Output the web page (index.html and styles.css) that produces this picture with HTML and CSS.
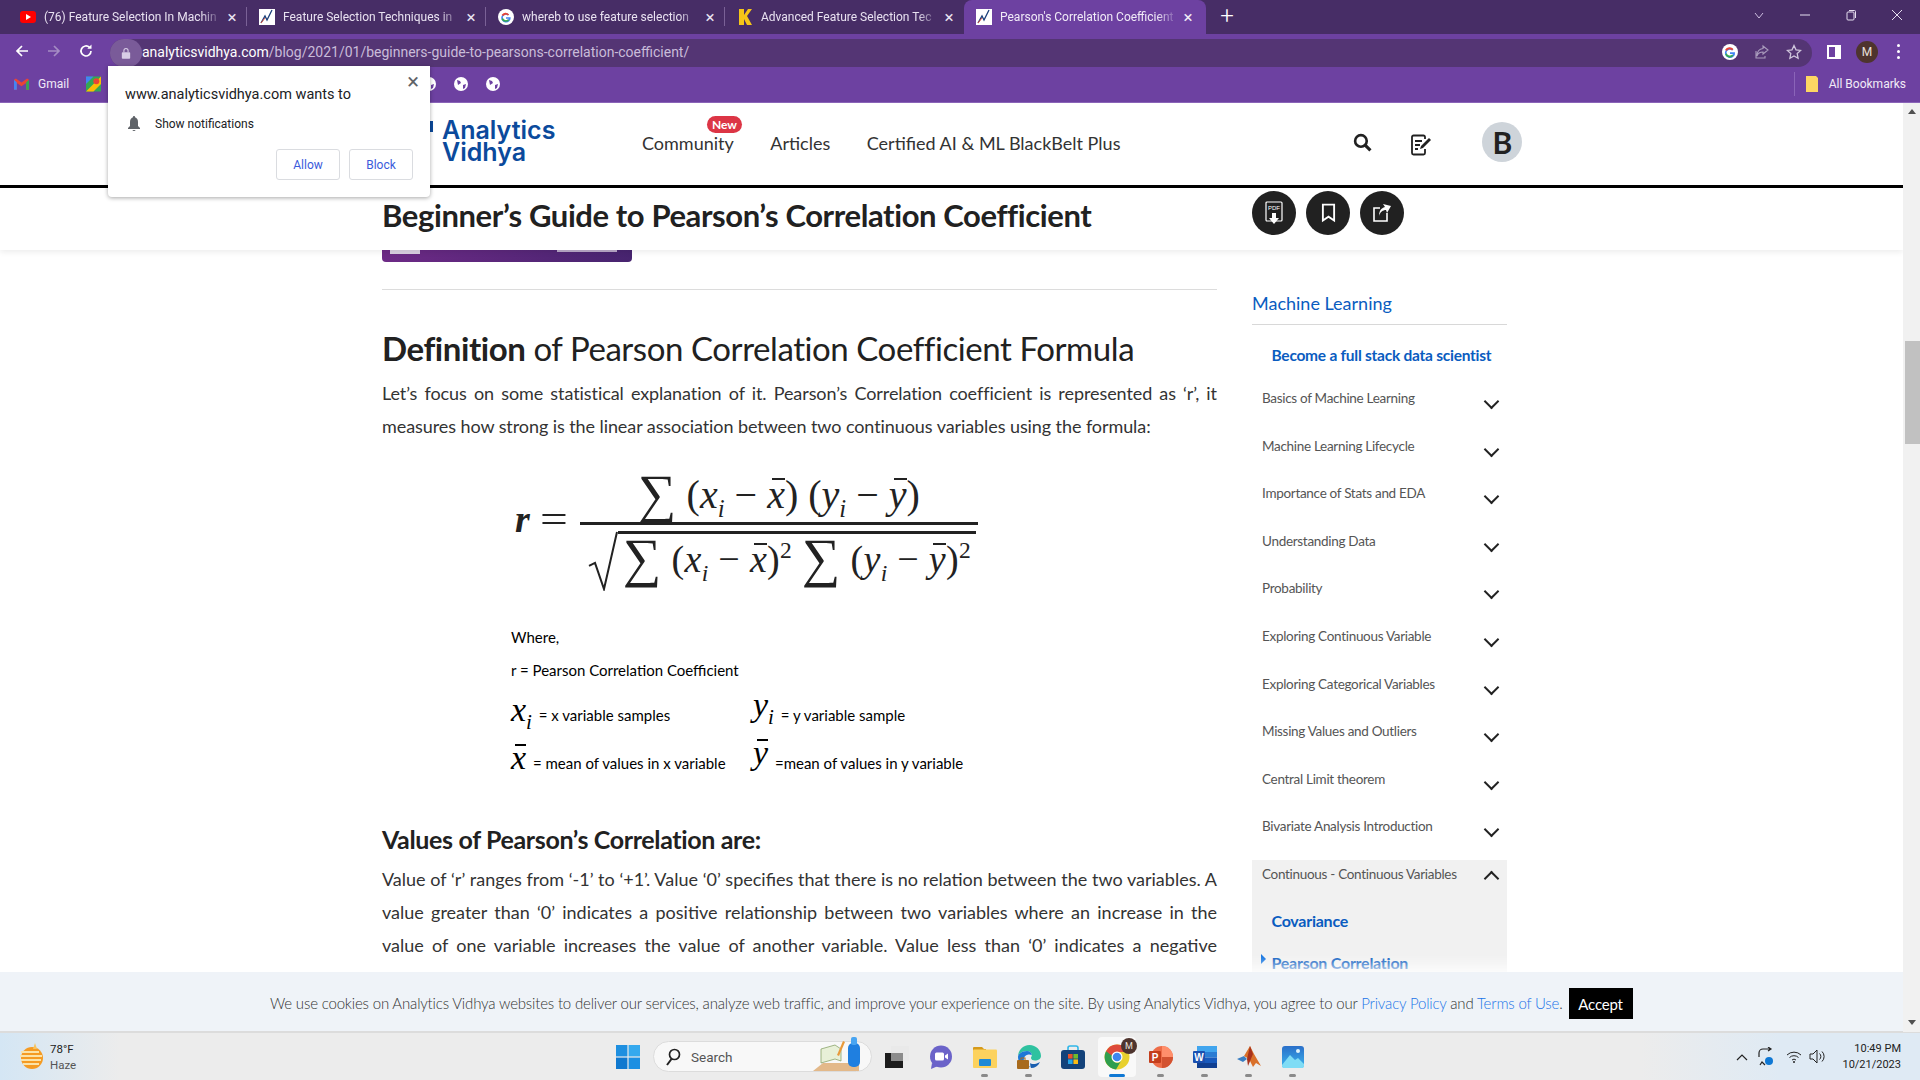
FILE: index.html
```html
<!DOCTYPE html>
<html lang="en">
<head>
  <meta charset="UTF-8" />
  <title>Pearson's Correlation Coefficient</title>
  <link rel="stylesheet" href="styles.css">
</head>
<body>

  <!-- browser chrome -->
  <div class="tabstrip">
    <div class="tab first">
      <svg class="fav" viewBox="0 0 16 16"><rect x="0" y="2" width="16" height="12" rx="3" fill="#f00"/><path d="M6 5l5 3-5 3z" fill="#fff"/></svg>
      <span class="tab-title">(76) Feature Selection In Machin</span><span class="tab-x">×</span>
    </div>
    <div class="tab">
      <svg class="fav" viewBox="0 0 16 16"><rect width="16" height="16" fill="#fff"/><path d="M2 14l4-7 2 4 5-10" fill="none" stroke="#1b3f7a" stroke-width="1.3"/><path d="M2 14l4-5" stroke="#e0503a" stroke-width="1"/></svg>
      <span class="tab-title">Feature Selection Techniques in</span><span class="tab-x">×</span>
    </div>
    <div class="tab">
      <svg class="fav" viewBox="0 0 16 16"><circle cx="8" cy="8" r="8" fill="#fff"/><path d="M12.6 8.2H8v1.6h2.7a3 3 0 1 1-.8-3.2l1.2-1.2A4.7 4.7 0 1 0 12.6 8.2z" fill="#4285f4"/><path d="M3.6 6l1.5 1.1a3 3 0 0 1 4.8-.5l1.2-1.2A4.7 4.7 0 0 0 3.6 6z" fill="#ea4335"/><path d="M3.5 10.2l1.5-1.1a3 3 0 0 0 4.9 1.2l1.2 1.1a4.7 4.7 0 0 1-7.600-1.200z" fill="#34a853"/></svg>
      <span class="tab-title">whereb to use feature selection</span><span class="tab-x">×</span>
    </div>
    <div class="tab">
      <svg class="fav" viewBox="0 0 16 16"><path d="M2 0h5v6l4-6h4l-5 7 5 9h-5l-3-6v6H2z" fill="#f5c518"/></svg>
      <span class="tab-title">Advanced Feature Selection Tec</span><span class="tab-x">×</span>
    </div>
    <div class="tab active">
      <svg class="fav" viewBox="0 0 16 16"><rect width="16" height="16" fill="#fff"/><path d="M2 14l4-7 2 4 5-10" fill="none" stroke="#1b3f7a" stroke-width="1.3"/><path d="M2 14l4-5" stroke="#e0503a" stroke-width="1"/></svg>
      <span class="tab-title">Pearson's Correlation Coefficient</span><span class="tab-x">×</span>
    </div>
    <div class="newtab">+</div>
    <div class="winctl">
      <svg viewBox="0 0 12 12"><path d="M2 4l4 5 4-5" fill="none" stroke="#cdbfe0"/></svg>
      <svg viewBox="0 0 12 12"><path d="M1 6h10" stroke="#e6dff0"/></svg>
      <svg viewBox="0 0 12 12"><rect x="2" y="3" width="7" height="8" rx="1" fill="none" stroke="#e6dff0"/><path d="M4 1.500h5.500a1 1 0 0 1 1 1V9" fill="none" stroke="#e6dff0"/></svg>
      <svg viewBox="0 0 12 12"><path d="M1 1l10 10M11 1L1 11" stroke="#e6dff0"/></svg>
    </div>
  </div>

  <div class="toolbar">
    <svg class="nav-ico" viewBox="0 0 16 16"><path d="M14 8H3M8 3L3 8l5 5" fill="none" stroke="#fff" stroke-width="1.700"/></svg>
    <svg class="nav-ico" viewBox="0 0 16 16"><path d="M2 8h11M8 3l5 5-5 5" fill="none" stroke="#a58cc4" stroke-width="1.700"/></svg>
    <svg class="nav-ico" viewBox="0 0 16 16"><path d="M13 8a5 5 0 1 1-1.500-3.600" fill="none" stroke="#fff" stroke-width="1.700"/><path d="M13.500 1.500v4.200H9.300z" fill="#fff"/></svg>
    <div class="omnibox">
      <div class="lock"><svg viewBox="0 0 12 14" width="10" height="12"><rect x="1" y="6" width="10" height="8" rx="1" fill="#d8cde6"/><path d="M3.500 6V4a2.500 2.500 0 0 1 5 0v2" fill="none" stroke="#d8cde6" stroke-width="1.300"/></svg></div>
      <div class="url"><b>analyticsvidhya.com</b>/blog/2021/01/beginners-guide-to-pearsons-correlation-coefficient/</div>
      <svg class="omni-ico" viewBox="0 0 16 16"><circle cx="8" cy="8" r="8" fill="#fff"/><path d="M13 8.200H8v1.800h3a3.300 3.300 0 1 1-.9-3.500l1.300-1.300A5.100 5.100 0 1 0 13 8.200z" fill="#4285f4"/><path d="M3.100 5.700l1.600 1.200a3.300 3.300 0 0 1 5.400-.5l1.300-1.300a5.100 5.100 0 0 0-8.300.6z" fill="#ea4335"/><path d="M3.100 10.500l1.600-1.200a3.300 3.300 0 0 0 5.500 1.300l1.300 1.200a5.100 5.100 0 0 1-8.400-1.300z" fill="#34a853"/></svg>
      <svg class="omni-ico" viewBox="0 0 16 16"><path d="M9 2l5 4-5 4V8C6 8 4 9 3 12c0-4 2-7 6-7.500zM2 7v7h9v-2" fill="none" stroke="#a99bbc" stroke-width="1.100"/></svg>
      <svg class="omni-ico" viewBox="0 0 16 16"><path d="M8 1.500l2 4.300 4.700.6-3.500 3.200.9 4.700L8 12l-4.100 2.300.9-4.700L1.300 6.400 6 5.800z" fill="none" stroke="#cfc5dc" stroke-width="1.300"/></svg>
    </div>
    <svg class="side-ico" viewBox="0 0 14 14"><rect x="1" y="1" width="12" height="12" fill="none" stroke="#fff" stroke-width="2"/><rect x="8" y="1" width="5" height="12" fill="#fff"/></svg>
    <div class="avatar">M</div>
    <div class="dots"><i></i><i></i><i></i></div>
  </div>

  <div class="bookmarks">
    <svg class="bm-ico" viewBox="0 0 16 12"><path d="M0 1.500V12h3V5l5 3.500L13 5v7h3V1.500L14 0 8 4.500 2 0z" fill="#ea4335"/><path d="M0 1.500V12h3V4z" fill="#4285f4"/><path d="M16 1.500V12h-3V4z" fill="#34a853"/></svg>
    <span class="bm-label">Gmail</span>
    <svg class="bm-maps" viewBox="0 0 16 16"><rect width="16" height="16" fill="#34a853"/><path d="M0 16L16 0v8L8 16z" fill="#fbbc04"/><path d="M0 0h8L0 8z" fill="#4285f4"/><circle cx="11" cy="5" r="3.200" fill="#ea4335"/></svg>
    <div class="globes">
      <svg class="globe" viewBox="0 0 14 14"><circle cx="7" cy="7" r="7" fill="#fff"/><path d="M3 3l3 1 1 2-3 2zM9 8l3-1-1 4-2 1z" fill="#6d41a1"/></svg>
      <svg class="globe" viewBox="0 0 14 14"><circle cx="7" cy="7" r="7" fill="#fff"/><path d="M3 3l3 1 1 2-3 2zM9 8l3-1-1 4-2 1z" fill="#6d41a1"/></svg>
      <svg class="globe" viewBox="0 0 14 14"><circle cx="7" cy="7" r="7" fill="#fff"/><path d="M3 3l3 1 1 2-3 2zM9 8l3-1-1 4-2 1z" fill="#6d41a1"/></svg>
    </div>
    <div class="all-bm">
      <svg width="12" height="16" viewBox="0 0 12 16"><path d="M0 0h10l2 2v14H0z" fill="#fdd663"/></svg>
      All Bookmarks
    </div>
  </div>

  <div class="viewport">
    <div class="page">

      <header class="site-head">
        <svg class="logo-mark" viewBox="0 0 30 30"><path d="M23 0h3v11h-5z" fill="#0b4a9c"/></svg>
        <div class="logo">Analytics<br>Vidhya</div>
        <nav class="site-nav">
          <a class="has-badge">Community<span class="badge">New</span></a>
          <a>Articles</a>
          <a>Certified AI &amp; ML BlackBelt Plus</a>
        </nav>
        <div class="head-icons">
          <svg class="ico-search" viewBox="0 0 18 18"><circle cx="7.500" cy="7.500" r="5.500" fill="none" stroke="#212121" stroke-width="2.500"/><path d="M11.500 11.500l5 5" stroke="#212121" stroke-width="3"/></svg>
          <svg class="ico-note" viewBox="0 0 22 22"><path d="M15 5V3a1.500 1.500 0 0 0-1.500-1.500h-10A1.500 1.500 0 0 0 2 3v16a1.500 1.500 0 0 0 1.500 1.500h10A1.500 1.500 0 0 0 15 19v-4" fill="none" stroke="#212121" stroke-width="1.800"/><path d="M5 7h7M5 11h5M5 15h3" stroke="#212121" stroke-width="1.800"/><path d="M10 15l1-3 8-8 2 2-8 8z" fill="#212121"/></svg>
          <div class="user-b">B</div>
        </div>
      </header>

      <div class="title-bar">
        <h1>Beginner’s Guide to Pearson’s Correlation Coefficient</h1>
        <div class="round-btns">
          <div class="round-btn"><svg viewBox="0 0 20 24" width="20" height="24"><rect x="2" y="1" width="16" height="19" rx="1" fill="none" stroke="#fff" stroke-width="1.200"/><text x="10" y="9" font-size="6" font-family="Liberation Sans" text-anchor="middle" fill="#fff">PDF</text><path d="M8 12h4v5h3l-5 6-5-6h3z" fill="#fff"/></svg></div>
          <div class="round-btn"><svg viewBox="0 0 16 20" width="15" height="20"><path d="M2 1h12v17l-6-4-6 4z" fill="none" stroke="#fff" stroke-width="2"/></svg></div>
          <div class="round-btn"><svg viewBox="0 0 20 20" width="20" height="20"><path d="M15 10v8H2V5h6" fill="none" stroke="#fff" stroke-width="1.600"/><path d="M11 1l8 2-4 7-1-3c-3 0-6 2-7 6 0-5 2-8 6-9z" fill="#fff"/></svg></div>
        </div>
      </div>

      <div class="content">
        <article class="article">
          <div class="banner"><i class="banner-a"></i><i class="banner-b"></i></div>
          <hr class="rule">
          <h2><strong>Definition</strong> of Pearson Correlation Coefficient Formula</h2>
          <p>Let’s focus on some statistical explanation of it. Pearson’s Correlation coefficient is represented as ‘r’, it measures how strong is the linear association between two continuous variables using the formula:</p>

          <div class="figure">
            <div class="formula">
              <span class="f-r">r</span><span class="f-eq">=</span>
              <div class="frac">
                <div class="num"><span class="sig">∑</span> (<i>x<sub>i</sub></i> − <i class="bar">x</i>) (<i>y<sub>i</sub></i> − <i class="bar">y</i>)</div>
                <div class="den">
                  <svg class="radical" viewBox="0 0 30 62" preserveAspectRatio="none"><path d="M1 36l6-3 9 27L29 1" fill="none" stroke="#222" stroke-width="2"/></svg>
                  <div class="den-in"><span class="sig">∑</span> (<i>x<sub>i</sub></i> − <i class="bar">x</i>)<sup>2</sup> <span class="sig">∑</span> (<i>y<sub>i</sub></i> − <i class="bar">y</i>)<sup>2</sup></div>
                </div>
              </div>
            </div>
            <div class="legend">
              <div class="leg-line">Where,</div>
              <div class="leg-line">r = Pearson Correlation Coefficient</div>
              <div class="leg-grid">
                <div><i class="leg-var">x<sub>i</sub></i> = x variable samples</div>
                <div><i class="leg-var up">y<sub>i</sub></i> = y variable sample</div>
                <div><i class="leg-var bar">x</i> = mean of values in x variable</div>
                <div><i class="leg-var bar up">y</i> =mean of values in y variable</div>
              </div>
            </div>
          </div>

          <h3>Values of Pearson’s Correlation are:</h3>
          <p>Value of ‘r’ ranges from ‘-1’ to ‘+1’. Value ‘0’ specifies that there is no relation between the two variables. A value greater than ‘0’ indicates a positive relationship between two variables where an increase in the value of one variable increases the value of another variable. Value less than ‘0’ indicates a negative relationship between two variables where an increase in the value of one decreases the value of another.</p>
        </article>

        <aside class="sidebar">
          <div class="side-title">Machine Learning</div>
          <div class="side-cta">Become a full stack data scientist</div>
          <div class="side-item">Basics of Machine Learning</div>
          <div class="side-item">Machine Learning Lifecycle</div>
          <div class="side-item">Importance of Stats and EDA</div>
          <div class="side-item">Understanding Data</div>
          <div class="side-item">Probability</div>
          <div class="side-item">Exploring Continuous Variable</div>
          <div class="side-item">Exploring Categorical Variables</div>
          <div class="side-item">Missing Values and Outliers</div>
          <div class="side-item">Central Limit theorem</div>
          <div class="side-item">Bivariate Analysis Introduction</div>
          <div class="side-open">
            <div class="side-item open">Continuous - Continuous Variables</div>
            <div class="side-sub">Covariance</div>
            <div class="side-sub current">Pearson Correlation</div>
          </div>
        </aside>
      </div>

      <div class="cookie">
        <span>We use cookies on Analytics Vidhya websites to deliver our services, analyze web traffic, and improve your experience on the site. By using Analytics Vidhya, you agree to our <a>Privacy Policy</a> and <a>Terms of Use</a>.</span>
        <button class="accept">Accept</button>
      </div>
    </div>

    <div class="scrollbar">
      <i class="sb-up"></i>
      <i class="sb-thumb"></i>
      <i class="sb-down"></i>
    </div>
  </div>

  <!-- site permission popup -->
  <div class="perm">
    <div class="perm-x">×</div>
    <div class="perm-title">www.analyticsvidhya.com wants to</div>
    <div class="perm-row">
      <svg width="14" height="15" viewBox="0 0 14 15"><path d="M7 0a1 1 0 0 1 1 1.200C10 1.800 11 3.500 11 6v4l2 2v1H1v-1l2-2V6c0-2.500 1-4.200 3-4.800A1 1 0 0 1 7 0zM5.500 14h3a1.500 1 0 0 1-3 0z" fill="#5f6368"/></svg>
      Show notifications
    </div>
    <div class="perm-btns"><button>Allow</button><button>Block</button></div>
  </div>

  <!-- windows taskbar -->
  <div class="taskbar">
    <div class="weather">
      <svg width="26" height="28" viewBox="0 0 26 28"><circle cx="13" cy="15" r="11" fill="#f59b23"/><path d="M2 9h18M1 13h22M2 17h20M4 21h16" stroke="#fbe3a8" stroke-width="2"/><path d="M16 0l2 6h-4z" fill="#f7c35f"/></svg>
      <div class="weather-txt"><div>78°F</div><div class="dim">Haze</div></div>
    </div>
    <div class="tb-item">
      <svg width="24" height="24" viewBox="0 0 24 24"><path d="M0 0h11.400v11.400H0z" fill="#1e8fe0"/><path d="M12.600 0H24v11.400H12.600z" fill="#35a9ee"/><path d="M0 12.600h11.400V24H0z" fill="#0f78cf"/><path d="M12.600 12.600H24V24H12.600z" fill="#1c8fe2"/></svg>
    </div>
    <div class="tb-search">
      <svg width="16" height="18" viewBox="0 0 16 18"><circle cx="9.500" cy="6.500" r="5" fill="none" stroke="#222" stroke-width="1.700"/><path d="M6.500 11L2 17" stroke="#222" stroke-width="2"/></svg>
      <span>Search</span>
      <svg class="search-art" width="56" height="34" viewBox="0 0 56 34"><path d="M0 34l10-8h36v8z" fill="#e3b98a"/><path d="M8 12l14-4 6 4v12l-6-2-14 4z" fill="#e8f0d8" stroke="#7d9a5a" stroke-width=".7"/><path d="M24 18l6-14 2 1-6 14z" fill="#e89a3c"/><rect x="35" y="6" width="12" height="24" rx="5" fill="#1f7fe0"/><rect x="38" y="0" width="6" height="8" rx="2" fill="#49a5f2"/></svg>
    </div>
    <div class="tb-item">
      <svg width="24" height="22" viewBox="0 0 24 22"><rect x="6" width="18" height="15" fill="#e9e9e9"/><rect y="7" width="18" height="15" fill="#1c1c1c"/><rect x="6" y="7" width="12" height="8" fill="#8c8c8c"/></svg>
    </div>
    <div class="tb-item">
      <svg width="24" height="24" viewBox="0 0 24 24"><circle cx="12" cy="11.500" r="11" fill="#6b63c9"/><path d="M3 18l-1 6 7-3z" fill="#6b63c9"/><rect x="6" y="7.500" width="9" height="8" rx="1.500" fill="#fff"/><path d="M16 10.500l3-2v6l-3-2z" fill="#fff"/></svg>
    </div>
    <div class="tb-item running">
      <svg width="24" height="22" viewBox="0 0 24 22"><path d="M0 2a1 1 0 0 1 1-1h8l2 2h2v3H0z" fill="#d69a1a"/><rect y="3.500" width="24" height="18.500" rx="1" fill="#fcd25e"/><rect x="6" y="13" width="12" height="7" rx="1" fill="#1f8ad6"/></svg>
    </div>
    <div class="tb-item running">
      <svg width="24" height="24" viewBox="0 0 24 24"><path d="M1 12C1 5 6 0 12.500 0 19 0 24 5 24 11c0 3-3 4.500-6 4.500-2 0-4-.8-4-2.500 0-1 .8-1.500.8-3C14.800 8 13 6 10 6 5 6 1 9 1 12z" fill="#2fc2a0"/><path d="M1 12c0-3 4-6 9-6 3 0 4.800 2 4.800 4-2-1-7-1-8 4 0 3 3 7 7 8C6 23 1 18 1 12z" fill="#1e78d6"/><path d="M14 23c4 0 7-2 9-6-3 2-8 3-10 1 .3 2 .5 4 1 5z" fill="#1a5fb0"/><rect y="15" width="12" height="9" rx="1" fill="#a86a1c"/><rect x="4" y="13" width="4" height="3" fill="none" stroke="#a86a1c"/></svg>
    </div>
    <div class="tb-item">
      <svg width="24" height="24" viewBox="0 0 24 24"><path d="M7 6V3a2 2 0 0 1 2-2h6a2 2 0 0 1 2 2v3" fill="none" stroke="#30b6e8" stroke-width="1.600"/><rect y="5" width="24" height="19" rx="3" fill="#13427a"/><rect x="7" y="9" width="4.600" height="4.600" fill="#e8532b"/><rect x="12.400" y="9" width="4.600" height="4.600" fill="#6fbb2c"/><rect x="7" y="14.400" width="4.600" height="4.600" fill="#22a5e8"/><rect x="12.400" y="14.400" width="4.600" height="4.600" fill="#f9bb14"/></svg>
    </div>
    <div class="tb-item active">
      <svg width="26" height="26" viewBox="0 0 26 26"><circle cx="13" cy="13" r="12.500" fill="#e8d02e"/><path d="M13 .5A12.500 12.500 0 0 0 2 7.300L7.500 16l1-4A5 5 0 0 1 13 8h11.300A12.500 12.500 0 0 0 13 .5z" fill="#de4b3b"/><path d="M2 7.300A12.500 12.500 0 0 0 12 25.500L17 17a5 5 0 0 1-8.500-5z" fill="#2f9e4e"/><circle cx="13" cy="13" r="5.500" fill="#fff"/><circle cx="13" cy="13" r="4.300" fill="#3f86ee"/></svg>
      <div class="tb-avatar">M</div>
    </div>
    <div class="tb-item running">
      <svg width="24" height="22" viewBox="0 0 24 22"><circle cx="13" cy="11" r="11" fill="#ed6c47"/><path d="M13 0a11 11 0 0 1 11 11H13z" fill="#ff8f6b"/><path d="M13 11h11a11 11 0 0 1-11 11z" fill="#d35230"/><rect y="5" width="12" height="12" rx="1" fill="#c43e1c"/><text x="6" y="14.500" font-size="10" font-weight="700" font-family="Liberation Sans" text-anchor="middle" fill="#fff">P</text></svg>
    </div>
    <div class="tb-item running">
      <svg width="24" height="22" viewBox="0 0 24 22"><rect x="4" width="20" height="6" fill="#41a5ee"/><rect x="4" y="6" width="20" height="5.500" fill="#2b7cd3"/><rect x="4" y="11.500" width="20" height="5.500" fill="#185abd"/><rect x="4" y="17" width="20" height="5" fill="#103f91"/><rect y="5" width="12" height="12" rx="1" fill="#1a50b0"/><text x="6" y="14.500" font-size="10" font-weight="700" font-family="Liberation Sans" text-anchor="middle" fill="#fff">W</text></svg>
    </div>
    <div class="tb-item running">
      <svg width="24" height="22" viewBox="0 0 24 22"><path d="M0 13l7-3 3 3-4 3z" fill="#3a7ec2"/><path d="M7 10l6-10 4 8 7 12-5-3-3 4-4-8z" fill="#d9702a"/><path d="M13 0l3 8-5 12 -1-7z" fill="#a8321c"/></svg>
    </div>
    <div class="tb-item running">
      <svg width="22" height="22" viewBox="0 0 22 22"><defs><linearGradient id="ph" x1="0" y1="0" x2="0" y2="1"><stop offset="0" stop-color="#2a6fc9"/><stop offset="1" stop-color="#3bb4ee"/></linearGradient></defs><rect width="22" height="22" rx="3" fill="url(#ph)"/><circle cx="16" cy="5" r="2" fill="#dff2fb"/><path d="M0 19l8-10 5 5 3-2 6 6v2a2 2 0 0 1-2 2H2a2 2 0 0 1-2-2z" fill="#7fdcf5"/></svg>
    </div>

    <div class="tray">
      <svg width="12" height="8" viewBox="0 0 12 8"><path d="M1 7l5-5 5 5" fill="none" stroke="#222" stroke-width="1.200"/></svg>
      <svg width="18" height="20" viewBox="0 0 18 20"><path d="M2 10V6a4 4 0 0 1 4-4h7M11 0l3 2-3 2M3 18l2-3 3 3" fill="none" stroke="#222" stroke-width="1.200"/><circle cx="12" cy="14" r="4" fill="#0f78d4"/></svg>
      <svg class="tray-wifi" width="16" height="13" viewBox="0 0 16 13"><path d="M1 5a10 10 0 0 1 14 0M3.500 7.500a6.500 6.500 0 0 1 9 0M6 10a3 3 0 0 1 4 0" fill="none" stroke="#222"/><circle cx="8" cy="12" r="1" fill="#222"/></svg>
      <svg width="17" height="15" viewBox="0 0 17 15"><path d="M1 5h3l4-4v13l-4-4H1zM10.500 4.500a4 4 0 0 1 0 6M13 2.500a7 7 0 0 1 0 10" fill="none" stroke="#222"/></svg>
      <div class="clock"><div>10:49 PM</div><div>10/21/2023</div></div>
    </div>
  </div>

</body>
</html>
```

FILE: styles.css
```css
* {
  box-sizing: border-box;
}

html, body {
  margin: 0;
  height: 100%;
  overflow: hidden;
}

body {
  position: relative;
  display: flex;
  flex-direction: column;
  width: 1920px;
  height: 1080px;
  font-family: "Lato", sans-serif;
  color: #212529;
  background: #fff;
}

/* tabs */
.tabstrip {
  display: flex;
  align-items: stretch;
  height: 34px;
  background: #472d66;
  font-family: "Roboto", sans-serif;
  font-size: 12px;
  color: #e9e2f1;
}

.tab {
  position: relative;
  display: flex;
  align-items: center;
  width: 239px;
  padding: 0 7px 0 12px;
}

.tab.first {
  width: 247px;
  padding-left: 20px;
}

.tab:not(.active)::after {
  content: "";
  position: absolute;
  right: 0;
  top: 7px;
  bottom: 8px;
  border-right: 1px solid #7a6196;
}

.tab:nth-child(4)::after {
  display: none;
}

.tab.active {
  width: 242px;
  padding: 0 10px 0 12px;
  background: #6d41a1;
  border-radius: 8px 8px 0 0;
  color: #f1ebf7;
}

.fav {
  flex: none;
  width: 16px;
  height: 16px;
  margin-right: 8px;
}

.tab-title {
  flex: 1;
  min-width: 0;
  white-space: nowrap;
  -webkit-mask-image: linear-gradient(to right, #000 88%, transparent);
  mask-image: linear-gradient(to right, #000 88%, transparent);
}

.tab-x {
  flex: none;
  width: 16px;
  margin-left: 2px;
  font-size: 17px;
  line-height: 16px;
  text-align: center;
}

.newtab {
  width: 42px;
  text-align: center;
  font-size: 24px;
  font-weight: 300;
  line-height: 33px;
  color: #fff;
}

.winctl {
  display: flex;
  align-items: center;
  gap: 34px;
  margin-left: auto;
  padding: 0 17px 5px 0;
}

.winctl svg {
  width: 12px;
  height: 12px;
}

/* toolbar */
.toolbar {
  display: flex;
  align-items: center;
  height: 33px;
  background: #6d41a1;
  padding-left: 14px;
}

.nav-ico {
  width: 16px;
  height: 16px;
  margin-right: 16px;
}

.omnibox {
  display: flex;
  align-items: center;
  flex: none;
  width: 1702px;
  height: 28px;
  margin-top: 4px;
  background: #543574;
  border-radius: 14px;
  padding-right: 10px;
  font-family: "Roboto", sans-serif;
  font-size: 14px;
  color: #c9bcd9;
}

.lock {
  display: flex;
  align-items: center;
  justify-content: center;
  flex: none;
  width: 32px;
  height: 28px;
  background: #7a5b99;
  border-radius: 14px;
}

.url {
  flex: 1;
  margin-top: -1px;
  white-space: nowrap;
}

.url b {
  font-weight: 400;
  color: #fff;
}

.omni-ico {
  width: 16px;
  height: 16px;
  margin-left: 16px;
  margin-top: -2px;
}

.side-ico {
  width: 14px;
  height: 14px;
  margin-left: 15px;
  margin-top: 2px;
}

.avatar {
  display: flex;
  align-items: center;
  justify-content: center;
  flex: none;
  width: 22px;
  height: 22px;
  margin-left: 15px;
  margin-top: 2px;
  border-radius: 50%;
  background: #4e342e;
  color: #e8e0dc;
  font-family: "Roboto", sans-serif;
  font-size: 12px;
}

.dots {
  display: flex;
  flex-direction: column;
  gap: 3px;
  margin-left: 19px;
  margin-top: 2px;
}

.dots i {
  width: 3px;
  height: 3px;
  border-radius: 50%;
  background: #fff;
}

/* bookmarks */
.bookmarks {
  display: flex;
  align-items: center;
  height: 36px;
  background: #6d41a1;
  border-bottom: 1px solid #8a64b8;
  padding: 0 0 2px 14px;
  font-family: "Roboto", sans-serif;
  font-size: 12px;
  color: #f1ebf7;
}

.bm-ico {
  width: 15px;
  height: 12px;
}

.bm-label {
  margin-left: 9px;
}

.bm-maps {
  width: 15px;
  height: 16px;
  margin-left: 17px;
}

.globes {
  display: flex;
  gap: 18px;
  margin-left: 321px;
}

.globe {
  width: 14px;
  height: 14px;
}

.all-bm {
  display: flex;
  align-items: center;
  gap: 11px;
  margin-left: auto;
  padding: 0 14px 0 11px;
  height: 24px;
  border-left: 1px solid #8a64b8;
}

/* page */
.viewport {
  position: relative;
  display: flex;
  flex: 1;
  min-height: 0;
  overflow: hidden;
}

.page {
  position: relative;
  flex: 1;
  min-width: 0;
  overflow: hidden;
}

.site-head {
  display: flex;
  align-items: center;
  height: 85px;
  padding: 0 0 3px 442px;
  border-bottom: 3px solid #000;
}

.logo-mark {
  flex: none;
  width: 30px;
  height: 30px;
  margin-left: -35px;
  margin-right: 5px;
  margin-top: -14px;
}

.logo {
  width: 200px;
  margin-top: -3px;
  font-family: "Inter", sans-serif;
  font-size: 25px;
  font-weight: 600;
  line-height: 22px;
  color: #0b4a9c;
}

.site-nav {
  display: flex;
  gap: 36.500px;
  font-size: 18px;
  color: #333;
  margin-top: 1px;
}

.has-badge {
  position: relative;
}

.badge {
  position: absolute;
  top: -16px;
  left: 65px;
  width: 35px;
  height: 17px;
  background: #dc3545;
  border-radius: 9px;
  color: #fff;
  font-size: 12px;
  font-weight: 700;
  line-height: 17px;
  text-align: center;
}

.head-icons {
  display: flex;
  align-items: center;
  margin-left: 233px;
}

.ico-search {
  width: 19px;
  height: 19px;
}

.ico-note {
  width: 22px;
  height: 22px;
  margin: 5px 0 0 38px;
}

.user-b {
  width: 40px;
  height: 40px;
  margin-left: 50px;
  margin-top: -1px;
  border-radius: 50%;
  background: #ced4da;
  color: #212121;
  font-size: 30px;
  font-weight: 700;
  line-height: 40px;
  text-align: center;
}

.title-bar {
  position: relative;
  z-index: 2;
  display: flex;
  align-items: flex-start;
  height: 62px;
  padding-left: 382px;
  background: #fff;
  box-shadow: 0 2px 6px rgba(0, 0, 0, 0.08);
}

.title-bar h1 {
  width: 870px;
  margin: 7px 0 0;
  font-size: 31px;
  font-weight: 700;
  line-height: 40px;
  letter-spacing: -0.400px;
  color: #212121;
}

.round-btns {
  display: flex;
  gap: 10px;
  margin-top: 3px;
}

.round-btn {
  display: flex;
  align-items: center;
  justify-content: center;
  width: 44px;
  height: 44px;
  border-radius: 50%;
  background: #212121;
}

.content {
  display: flex;
  gap: 35px;
  padding-left: 382px;
}

.article {
  width: 835px;
}

.banner {
  position: relative;
  width: 250px;
  height: 12px;
  background: linear-gradient(90deg, #6d2a86, #47246f);
  border-radius: 0 0 4px 4px;
}

.banner-a {
  position: absolute;
  left: 8px;
  top: 0;
  width: 30px;
  height: 4px;
  background: #d9cfe0;
}

.banner-b {
  position: absolute;
  left: 175px;
  top: 0;
  width: 60px;
  height: 2px;
  background: #b9a8c8;
}

.rule {
  height: 1px;
  margin: 27px 0 0;
  border: none;
  background: #dcdcdc;
}

.article h2 {
  margin: 36px 0 0;
  font-size: 33px;
  font-weight: 400;
  line-height: 44px;
  letter-spacing: -0.430px;
  color: #212121;
}

.article h2 strong {
  font-weight: 700;
}

.article p {
  margin: 0;
  font-size: 18px;
  line-height: 33px;
  text-align: justify;
  color: #333;
}

.article h2 + p {
  margin-top: 7px;
  letter-spacing: -0.080px;
}

.article h3 {
  margin: -1px 0 0;
  font-size: 25px;
  font-weight: 700;
  line-height: 34px;
  letter-spacing: -0.350px;
  color: #212121;
}

.article h3 + p {
  margin-top: 7px;
}

/* formula image */
.figure {
  height: 380px;
  padding: 28px 0 0 133px;
  color: #000;
}

.formula {
  display: flex;
  align-items: flex-start;
  height: 118px;
  font-family: "Liberation Serif", serif;
  font-size: 38px;
  color: #222;
}

.f-r {
  width: 25px;
  margin-top: 26px;
  font-style: italic;
  font-weight: 700;
}

.f-eq {
  width: 40px;
  margin-top: 26px;
  transform: scaleX(1.300);
  transform-origin: left center;
}

.frac {
  width: 398px;
}

.num {
  height: 54px;
  border-bottom: 3px solid #222;
  font-size: 40px;
  text-align: center;
  line-height: 48px;
  white-space: nowrap;
}

.den {
  display: flex;
  height: 62px;
  padding: 6px 0 0 8px;
}

.radical {
  flex: none;
  width: 30px;
  height: 60px;
}

.den-in {
  flex: 1;
  height: 50px;
  border-top: 3px solid #222;
  line-height: 50px;
  white-space: nowrap;
  text-align: center;
  margin-right: 2px;
  letter-spacing: 0.300px;
}

.formula sub, .leg-var sub {
  font-size: 0.62em;
  line-height: 0;
}

.formula sup {
  font-size: 0.62em;
  line-height: 0;
}

.sig {
  font-size: 54px;
  line-height: 0;
  vertical-align: -4px;
}

.bar {
  position: relative;
}

.bar::before {
  content: "";
  position: absolute;
  left: 0.120em;
  right: 0;
  top: 0.140em;
  height: 2px;
  background: currentColor;
}

.legend {
  margin: 0 0 0 -4px;
  padding-top: 32px;
  font-size: 15px;
}

.leg-line {
  height: 33px;
  line-height: 33px;
}

.leg-grid {
  display: grid;
  grid-template-columns: 242px auto;
  grid-auto-rows: 48px;
  margin-top: 8px;
  white-space: nowrap;
}

.leg-var {
  margin-right: 3px;
  font-family: "Liberation Serif", serif;
  font-size: 34px;
  line-height: 30px;
}

.leg-var.up {
  position: relative;
  top: -5px;
}

/* sidebar */
.sidebar {
  width: 255px;
  padding-top: 41px;
}

.side-title {
  height: 34px;
  line-height: 24px;
  border-bottom: 1px solid #d8d8d8;
  font-size: 18px;
  color: #0a5cc0;
}

.side-cta {
  margin: 19px 0 18px 19.500px;
  font-size: 15.500px;
  font-weight: 700;
  line-height: 22px;
  letter-spacing: -0.250px;
  color: #0a5cc0;
  white-space: nowrap;
}

.side-item {
  display: flex;
  justify-content: space-between;
  height: 47.600px;
  padding: 0 9px 0 10px;
  font-size: 13.500px;
  line-height: 28px;
  letter-spacing: -0.300px;
  color: #555;
  white-space: nowrap;
}

.side-item::after {
  content: "";
  flex: none;
  width: 9px;
  height: 9px;
  margin: 12px 1px 0 0;
  border-right: 2px solid #222;
  border-bottom: 2px solid #222;
  transform: rotate(45deg);
}

.side-item.open::after {
  margin-top: 13px;
  transform: rotate(225deg);
}

.side-open {
  padding-bottom: 60px;
  background: #f1f1f1;
}

.side-sub {
  position: relative;
  top: -1px;
  height: 42px;
  margin-left: 19.500px;
  font-size: 16px;
  font-weight: 700;
  line-height: 28px;
  letter-spacing: -0.250px;
  color: #0a5cc0;
}

.side-sub.current::before {
  content: "";
  position: absolute;
  left: -11px;
  top: 5px;
  border-left: 5px solid #0a6fe0;
  border-top: 5px solid transparent;
  border-bottom: 5px solid transparent;
}

/* cookie bar */
.cookie {
  position: absolute;
  z-index: 3;
  left: 0;
  right: 0;
  bottom: 0;
  display: flex;
  align-items: center;
  height: 60px;
  padding: 3px 0 0 270px;
  background: #eff3f8;
  box-shadow: 0 -6px 14px rgba(255, 255, 255, 0.9);
  border-bottom: 1px solid #dcdcdc;
  font-size: 15px;
  font-weight: 300;
  letter-spacing: -0.175px;
  color: #333;
  white-space: nowrap;
}

.cookie a {
  color: #1a73e8;
}

.accept {
  flex: none;
  width: 64px;
  height: 31px;
  margin: 1px 0 0 6px;
  border: none;
  background: #000;
  color: #fff;
  font-family: "Lato", sans-serif;
  font-size: 15px;
  letter-spacing: -0.200px;
}

/* scrollbar */
.scrollbar {
  position: relative;
  flex: none;
  width: 17px;
  background: #f1f1f1;
}

.sb-up {
  position: absolute;
  left: 5px;
  top: 6px;
  border-bottom: 5px solid #505050;
  border-left: 4px solid transparent;
  border-right: 4px solid transparent;
}

.sb-thumb {
  position: absolute;
  left: 2px;
  right: 0;
  top: 238px;
  height: 103px;
  background: #c1c1c1;
}

.sb-down {
  position: absolute;
  left: 5px;
  bottom: 7px;
  border-top: 5px solid #505050;
  border-left: 4px solid transparent;
  border-right: 4px solid transparent;
}

/* permission popup */
.perm {
  position: absolute;
  z-index: 5;
  left: 108px;
  top: 66px;
  width: 322px;
  height: 131px;
  background: #fff;
  border-radius: 0 0 4px 4px;
  box-shadow: 0 1px 4px rgba(0, 0, 0, 0.35);
  font-family: "Roboto", sans-serif;
  color: #202124;
}

.perm-x {
  position: absolute;
  right: 11px;
  top: 5px;
  font-size: 22px;
  line-height: 22px;
  color: #5f6368;
}

.perm-title {
  padding: 19px 0 0 17px;
  font-size: 14.500px;
  line-height: 20px;
}

.perm-row {
  display: flex;
  align-items: center;
  gap: 14px;
  padding: 11px 0 0 19px;
  font-size: 12px;
}

.perm-btns {
  display: flex;
  justify-content: flex-end;
  gap: 9px;
  padding: 18px 17px 0 0;
}

.perm-btns button {
  width: 64px;
  height: 31px;
  background: #fff;
  border: 1px solid #dadce0;
  border-radius: 3px;
  color: #3b5bdb;
  font-family: "Roboto", sans-serif;
  font-size: 12px;
}

/* taskbar */
.taskbar {
  display: flex;
  align-items: center;
  height: 48px;
  background: linear-gradient(90deg, #d4e6f4, #ececec 120px, #ececec 1640px, #dfeaf4 1780px);
  border-top: 1px solid #dcdcdc;
  font-family: "Roboto", sans-serif;
  font-size: 12px;
  color: #222;
}

.weather {
  display: flex;
  align-items: center;
  gap: 5px;
  width: 606px;
  padding-left: 19px;
}

.weather-txt {
  line-height: 16px;
  font-size: 11.500px;
}

.dim {
  color: #555;
}

.tb-item {
  position: relative;
  display: flex;
  align-items: center;
  justify-content: center;
  flex: none;
  width: 44px;
  height: 40px;
}

.tb-item.running::after {
  content: "";
  position: absolute;
  left: 18px;
  bottom: 0;
  width: 7px;
  height: 3px;
  border-radius: 2px;
  background: #8a8a8a;
}

.tb-item.active {
  width: 38px;
  margin: 0 3px;
  background: #f9f9f9;
  border-radius: 4px;
}

.tb-item.active::after {
  content: "";
  position: absolute;
  left: 11px;
  bottom: 0;
  width: 16px;
  height: 3px;
  border-radius: 2px;
  background: #0f78d4;
}

.tb-avatar {
  position: absolute;
  right: -1px;
  top: 1px;
  width: 16px;
  height: 16px;
  border-radius: 50%;
  background: #4e342e;
  color: #e8e0dc;
  font-size: 9px;
  line-height: 16px;
  text-align: center;
}

.tb-search {
  position: relative;
  display: flex;
  align-items: center;
  flex: none;
  gap: 10px;
  width: 219px;
  height: 31px;
  margin: 0 3px;
  padding-left: 11px;
  background: #f8f8f8;
  border: 1px solid #dcdcdc;
  border-radius: 16px;
  font-size: 13.500px;
  color: #555;
}

.search-art {
  position: absolute;
  right: 2px;
  bottom: 0;
}

.tray {
  display: flex;
  align-items: center;
  gap: 9px;
  margin-left: auto;
  padding-right: 19px;
}

.tray-wifi {
  margin: 0 -2px 0 2px;
}

.clock {
  margin-left: 7px;
  font-size: 11px;
  line-height: 16px;
  text-align: right;
}
```
